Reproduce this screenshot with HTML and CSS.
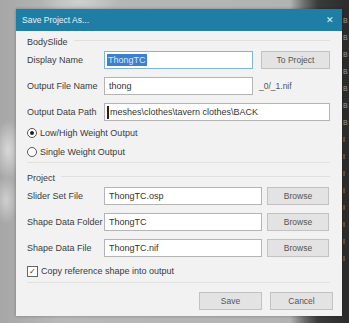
FILE: index.html
```html
<!DOCTYPE html>
<html lang="en">
<head>
  <meta charset="UTF-8" />
  <title>Save Project As...</title>
  <link rel="stylesheet" href="styles.css">
</head>
<body>

<div class="desk">
  <div class="dialog">
    <div class="titlebar">
      <span class="title">Save Project As...</span>
      <span class="close">&#x2715;</span>
    </div>

    <div class="body">
      <div class="group">
        <div class="legend"><span>BodySlide</span></div>

        <div class="row first">
          <label>Display Name</label>
          <div class="field focus short"><span class="sel">ThongTC</span></div>
          <button class="btn project">To Project</button>
        </div>

        <div class="row">
          <label>Output File Name</label>
          <div class="field short">thong</div>
          <span class="suffix">_0/_1.nif</span>
        </div>

        <div class="row">
          <label>Output Data Path</label>
          <div class="field wide"><span class="caret"></span>meshes\clothes\tavern clothes\BACK</div>
        </div>

        <div class="option first-opt">
          <span class="radio on"></span>Low/High Weight Output
        </div>
        <div class="option">
          <span class="radio"></span>Single Weight Output
        </div>
      </div>

      <div class="group project-group">
        <div class="legend"><span>Project</span></div>

        <div class="row first">
          <label>Slider Set File</label>
          <div class="field mid">ThongTC.osp</div>
          <button class="btn browse">Browse</button>
        </div>

        <div class="row">
          <label>Shape Data Folder</label>
          <div class="field mid">ThongTC</div>
          <button class="btn browse">Browse</button>
        </div>

        <div class="row">
          <label>Shape Data File</label>
          <div class="field mid">ThongTC.nif</div>
          <button class="btn browse">Browse</button>
        </div>

        <div class="option check-opt">
          <span class="check">&#x2713;</span>Copy reference shape into output
        </div>
      </div>

      <div class="footer">
        <button class="btn action">Save</button>
        <button class="btn action">Cancel</button>
      </div>
    </div>
  </div>

  <div class="strip">
    <span>B</span><span>B</span><span>B</span><span>B</span><span>B</span><span>B</span><span>B</span>
    <span>I</span><span>I</span><span>I</span><span>I</span><span>I</span><span>I</span><span>I</span><span>I</span>
  </div>
</div>

</body>
</html>
```

FILE: styles.css
```css
body {
  margin: 0;
  width: 349px;
  height: 323px;
  overflow: hidden;
  font-family: "Liberation Sans", Arial, sans-serif;
  font-size: 9px;
  color: #3a3a3a;
  background:
    radial-gradient(ellipse 14px 30px at 8px 150px, rgba(255,255,255,0.55), transparent),
    radial-gradient(ellipse 12px 24px at 6px 200px, rgba(255,255,255,0.45), transparent),
    radial-gradient(ellipse 40px 12px at 80px 2px, rgba(255,255,255,0.35), transparent),
    linear-gradient(to right, #a7a7a7 0, #b8b8b8 60px, #b3b3b3 290px, #6a6a6a 305px, #3a3a3a 318px, #2b2b2b 349px);
}

.desk {
  display: flex;
  align-items: flex-start;
  height: 323px;
}

.dialog {
  margin: 9px 0 0 16px;
  width: 326px;
  height: 307px;
  background: #f2f2f2;
  box-shadow: 0 0 3px rgba(0,0,0,0.3);
  display: flex;
  flex-direction: column;
}

.titlebar {
  height: 22px;
  background: #1f7ea6;
  color: #fff;
  display: flex;
  align-items: center;
  justify-content: space-between;
  padding: 0 8px 0 6px;
}

.title {
  font-size: 8.5px;
  color: #e8f3f8;
}

.close {
  font-size: 9px;
  color: #e6f1f6;
}

.body {
  flex: 1;
  display: flex;
  flex-direction: column;
  padding: 0 12px 0 11px;
}

.group {
  display: flex;
  flex-direction: column;
  border-bottom: 1px solid #e2e2e2;
  padding-bottom: 3px;
}

.legend {
  display: flex;
  align-items: center;
  height: 10px;
  margin-top: 6px;
  gap: 6px;
}

.legend::after {
  content: "";
  flex: 1;
  border-top: 1px solid #e0e0e0;
  margin-top: -3px;
}

.row {
  display: flex;
  align-items: center;
  height: 18px;
  margin-top: 8px;
}

.row.first {
  margin-top: 4px;
}

label {
  width: 77px;
  flex-shrink: 0;
  color: #3c3c3c;
}

.field {
  height: 18px;
  box-sizing: border-box;
  border: 1px solid #b4b4b4;
  background: #fff;
  color: #333;
  padding: 0 4px;
  display: flex;
  align-items: center;
}

.field.short { width: 149px; }
.field.mid { width: 158px; }
.field.wide { width: 226px; }

.field.focus {
  border-color: #7fb4d8;
  padding-left: 2px;
}

.sel {
  background: #3d7fd0;
  color: #dbe8f7;
  padding: 1px 1px;
}

.caret {
  width: 2px;
  height: 13px;
  background: #222;
  margin: 0 1px 0 -2px;
}

.suffix {
  margin-left: 6px;
  color: #555;
  font-size: 8.5px;
}

.btn {
  height: 18px;
  box-sizing: border-box;
  border: 1px solid #c2c2c2;
  background: #e3e3e3;
  color: #555;
  font-family: "Liberation Sans", Arial, sans-serif;
  font-size: 8.5px;
  padding: 0;
}

.project {
  width: 69px;
  margin-left: 8px;
}

.browse {
  width: 62px;
  margin-left: 5px;
}

.option {
  display: flex;
  align-items: center;
  height: 14px;
  margin-top: 5px;
}

.option.first-opt {
  margin-top: 5px;
}

.radio {
  width: 8px;
  height: 8px;
  border: 1px solid #555;
  border-radius: 50%;
  background: #fff;
  margin-right: 3px;
  display: flex;
  align-items: center;
  justify-content: center;
}

.radio.on::after {
  content: "";
  width: 4px;
  height: 4px;
  border-radius: 50%;
  background: #222;
}

.project-group {
  padding-bottom: 4px;
}

.project-group .legend {
  margin-top: 10px;
}

.check-opt {
  margin-top: 7px;
}

.check {
  width: 9px;
  height: 9px;
  border: 1px solid #666;
  background: #fff;
  color: #333;
  font-size: 8px;
  line-height: 9px;
  text-align: center;
  margin-right: 3px;
}

.footer {
  display: flex;
  justify-content: flex-end;
  gap: 8px;
  margin-top: 9px;
  margin-right: -3px;
}

.action {
  width: 63px;
}

.strip {
  margin-left: 1px;
  width: 6px;
  height: 323px;
  box-sizing: border-box;
  overflow: hidden;
  display: flex;
  flex-direction: column;
  gap: 10px;
  padding-top: 17px;
  font-size: 7px;
  color: #9a9a9a;
  white-space: nowrap;
}
```
